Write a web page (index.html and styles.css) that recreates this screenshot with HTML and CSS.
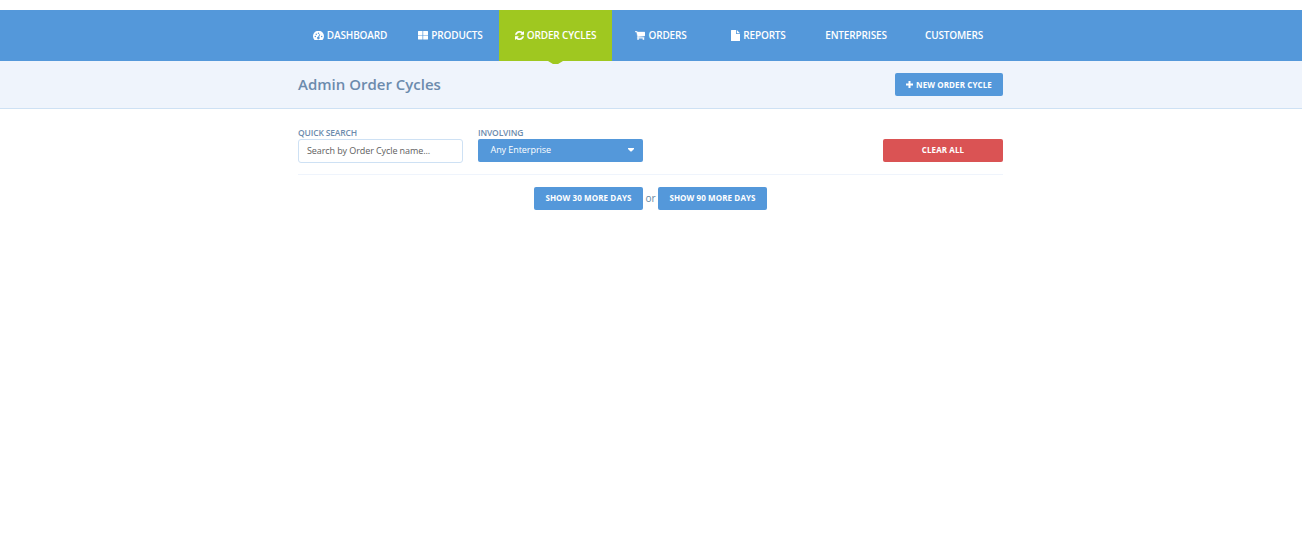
FILE: index.html
```html
<!DOCTYPE html>
<html lang="en">
<head>
<meta charset="utf-8">
<title>Admin Order Cycles</title>
<link rel="stylesheet" href="styles.css">
</head>
<body>
<nav class="menu">
  <ul class="container tabs">
    <li class="tab"><svg class="icon" width="11" height="9" viewBox="0 0 22 18"><path fill="#fff" fill-rule="evenodd" d="M3 18a11 11 0 1 1 16 0zM4.600 9.600a1.500 1.500 0 1 0 0 3 1.500 1.500 0 0 0 0-3zM6.500 5a1.500 1.500 0 1 0 0 3 1.500 1.500 0 0 0 0-3zM11 3a1.500 1.500 0 1 0 0 3 1.500 1.500 0 0 0 0-3zM17.400 9.600a1.500 1.500 0 1 0 0 3 1.500 1.500 0 0 0 0-3zM12.700 6.500l-2.400 5.200a2.500 2.500 0 1 0 2 .5l2.200-5z"/></svg><span>DASHBOARD</span></li>
    <li class="tab"><svg class="icon" width="10" height="9" viewBox="0 0 10 9"><path fill="#fff" d="M0 .5q0-.5.5-.5h4v4H0zM5.200 0h4.300q.5 0 .5.500V4H5.200zM0 4.400h4.500V8.500H.5q-.5 0-.5-.5zM5.200 4.400H10V8q0 .5-.5.5H5.200z"/></svg><span>PRODUCTS</span></li>
    <li class="tab active"><svg class="icon" width="9" height="9" viewBox="0 0 1536 1536"><path fill="#fff" stroke="#fff" stroke-width="50" d="M1511 928q0 5-1 7-64 268-268 434.500T764 1536q-146 0-282.500-55T238 1324l-129 129q-19 19-45 19t-45-19-19-45V960q0-26 19-45t45-19h448q26 0 45 19t19 45-19 45l-137 137q71 66 161 102t187 36q134 0 250-65t186-179q11-17 53-117 8-23 30-23h192q13 0 22.500 9.500t9.500 22.500zm25-800v448q0 26-19 45t-45 19h-448q-26 0-45-19t-19-45 19-45l138-138Q969 256 768 256q-134 0-250 65T332 500q-11 17-53 117-8 23-30 23H50q-13 0-22.500-9.500T18 608v-7q65-268 270-434.500T768 0q146 0 284 55.500T1297 212l130-129q19-19 45-19t45 19 19 45z"/></svg><span>ORDER CYCLES</span></li>
    <li class="tab"><svg class="icon" width="10" height="9" viewBox="0 0 1664 1408"><path fill="#fff" stroke="#fff" stroke-width="60" d="M640 1280a128 128 0 1 1-256 0 128 128 0 0 1 256 0zm896 0a128 128 0 1 1-256 0 128 128 0 0 1 256 0zM1664 192v512q0 24-16.500 42.500T1607 768L563 890q13 60 13 70 0 16-24 64h920q26 0 45 19t19 45-19 45-45 19H448q-26 0-45-19t-19-45q0-11 8-31.500t16-36 21.500-40T445 951L268 128H64q-26 0-45-19T0 64t19-45T64 0h256q16 0 28.500 6.500T368 22t13 24.500 8 26 5.500 29.500 4.500 26h1201q26 0 45 19t19 45z"/></svg><span>ORDERS</span></li>
    <li class="tab"><svg class="icon" width="9" height="11" viewBox="0 0 9 11"><path fill="#fff" d="M0 .5Q0 0 .5 0H5v3.500q0 .5.500.5H9v6.500q0 .5-.5.500h-8q-.5 0-.5-.5zM5.800 0 9 3.200H5.800z"/></svg><span>REPORTS</span></li>
    <li class="tab"><span>ENTERPRISES</span></li>
    <li class="tab"><span>CUSTOMERS</span></li>
  </ul>
</nav>
<header class="heading">
  <div class="container heading-row">
    <h1 class="title">Admin Order Cycles</h1>
    <a class="button new"><svg class="plus" width="7" height="7" viewBox="0 0 7 7"><path fill="#fff" d="M2.500 0h2v2.500H7v2H4.500V7h-2V4.500H0v-2h2.500z"/></svg><span>NEW ORDER CYCLE</span></a>
  </div>
</header>
<main class="container">
  <div class="filters">
    <div class="field"><label class="label">QUICK SEARCH</label><div class="input">Search by Order Cycle name...</div></div>
    <div class="field"><label class="label">INVOLVING</label><div class="select"><span>Any Enterprise</span><svg class="caret" width="6" height="4" viewBox="0 0 6 4"><path fill="#fff" d="M0 0h6v1L3.500 3.500h-1L0 1z"/></svg></div></div>
    <a class="button clear">CLEAR ALL</a>
  </div>
  <div class="more"><a class="button days">SHOW 30 MORE DAYS</a><span class="or">or</span><a class="button days">SHOW 90 MORE DAYS</a></div>
</main>
</body>
</html>
```
FILE: styles.css
```css
* { box-sizing: border-box; }
body { margin: 0; padding-top: 10px; background: #fff; color: #6788a2; font: 10px/14px "Open Sans", sans-serif; }
.container { width: 705px; margin: 0 auto 0 298px; }
.menu { height: 51px; background: #5498da; }
.tabs { display: grid; grid-template-columns: 104px 97px 113px 98px 97px 98px 98px; height: 51px; padding: 0; list-style: none; }
.tab { position: relative; display: flex; align-items: center; justify-content: center; gap: 3px; color: #fff; font-weight: 600; letter-spacing: -0.15px; white-space: nowrap; }
.tab span { padding-bottom: 1px; }
.active { background: #9fc820; }
.active::after { content: ""; position: absolute; top: 51px; left: 49px; width: 15px; height: 3px; background: #9fc820; clip-path: polygon(0 0, 100% 0, 67% 100%, 33% 100%); }
.icon { flex: none; }
.heading { height: 48px; background: #eff4fc; border-bottom: 1px solid #cee1f4; }
.heading-row { display: flex; align-items: center; justify-content: space-between; height: 47px; }
.title { margin: 0; padding-bottom: 2px; color: #6c8bad; font-size: 15px; line-height: 20px; font-weight: 600; }
.button { display: flex; align-items: center; justify-content: center; height: 23px; border-radius: 2px; background: #5498da; color: #fff; font-size: 8px; font-weight: 700; letter-spacing: 0.1px; white-space: nowrap; }
.new { width: 108px; gap: 3px; }
.filters { display: flex; align-items: flex-start; gap: 15px; height: 66px; padding-top: 18px; border-bottom: 1px solid #eff4fc; }
.field { width: 165px; }
.label { display: block; height: 12px; color: #6c8bad; font-size: 8.5px; line-height: 12px; font-weight: 600; letter-spacing: -0.15px; }
.input { height: 24px; padding-left: 8px; border: 1px solid #cee1f4; border-radius: 3px; color: #606060; font-size: 9px; line-height: 22px; letter-spacing: -0.09px; }
.select { display: flex; align-items: center; justify-content: space-between; height: 23px; padding: 0 9px 1px 12.5px; border-radius: 2px; background: #5498da; color: #fff; font-size: 9px; letter-spacing: -0.06px; }
.clear { width: 120px; margin: 12px 0 0 auto; padding-bottom: 1px; background: #da5354; }
.more { display: flex; justify-content: center; margin-top: 12px; }
.days { width: 109px; padding-bottom: 1px; }
.or { width: 15px; text-align: center; line-height: 22px; }
```
